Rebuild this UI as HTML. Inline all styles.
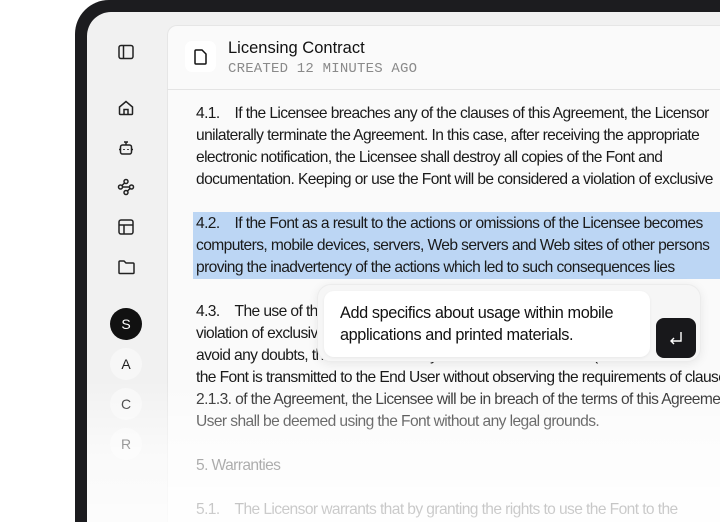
<!DOCTYPE html>
<html><head><style>
*{margin:0;padding:0;box-sizing:border-box}
html,body{width:720px;height:522px;overflow:hidden}
body{background:#fff;position:relative;font-family:"Liberation Sans",sans-serif}
.bezel{position:absolute;left:75px;top:0;width:645px;height:522px;background:#1c1c1f;border-radius:34px 0 0 0}
.screen{position:absolute;left:87px;top:12px;width:633px;height:510px;background:#f1f1f1;border-radius:24px 0 0 0;overflow:hidden}
.panel{position:absolute;left:167px;top:25px;width:553px;height:497px;background:#fafafa;border:1px solid #e6e6e6;border-right:0;border-bottom:0;border-radius:10px 0 0 0}
.hdr{position:absolute;left:167px;top:25px;width:553px;height:65px;border-bottom:1px solid #e4e4e4}
.docic{position:absolute;left:185px;top:41px;width:31px;height:31px;background:#fff;border-radius:7px}
.title{position:absolute;left:228px;top:39px;font-size:16.5px;color:#111}
.sub{position:absolute;left:228px;top:61px;font-family:"Liberation Mono",monospace;font-size:14px;color:#8a8a8a;letter-spacing:.2px}
.t{position:absolute;left:196px;font-size:15.6px;color:#1a1a1a;white-space:nowrap;letter-spacing:-0.6px;line-height:22px}
.hl{position:absolute;left:193px;top:212px;width:540px;height:67px;background:#bcd6f4}
.sb svg{position:absolute}
.av{position:absolute;left:110px;width:32px;height:32px;border-radius:50%;background:#f7f7f7;text-align:center;line-height:32px;font-size:14px;color:#222}
.fade{position:absolute;left:87px;top:380px;width:633px;height:142px;background:linear-gradient(rgba(255,255,255,0),rgba(255,255,255,.6) 50%,rgba(255,255,255,.8))}
.pop{position:absolute;left:317px;top:284px;width:384px;height:78px;background:#f6f6f6;border-radius:14px;box-shadow:0 2px 10px rgba(0,0,0,.08);border:1px solid #ececec}
.card{position:absolute;left:324px;top:291px;width:326px;height:66px;background:#fff;border-radius:10px;box-shadow:0 1px 3px rgba(0,0,0,.06)}
.ptxt{position:absolute;left:340px;top:302px;font-size:16.3px;line-height:22px;color:#111;letter-spacing:-0.4px}
.btn{position:absolute;left:656px;top:318px;width:40px;height:40px;background:#18181b;border-radius:8px}
</style></head><body>
<div class="bezel"></div>
<div class="screen"></div>
<div class="panel"></div>
<div class="hdr"></div>
<div class="docic"><svg width="31" height="31" viewBox="0 0 31 31"><path d="M11 9h6l4 4v9a1 1 0 0 1-1 1h-9a1 1 0 0 1-1-1V10a1 1 0 0 1 1-1z" fill="none" stroke="#111" stroke-width="1.5"/></svg></div>
<div class="title">Licensing Contract</div>
<div class="sub">CREATED 12 MINUTES AGO</div>
<div class="sb">
<svg style="left:117px;top:43px" width="18" height="18" viewBox="0 0 18 18" fill="none" stroke="#222" stroke-width="1.5"><rect x="2" y="2.5" width="14" height="13" rx="2"/><path d="M6.5 2.5v13"/></svg>
<svg style="left:117px;top:99px" width="18" height="18" viewBox="0 0 18 18" fill="none" stroke="#222" stroke-width="1.5"><path d="M2.5 8L9 2.5 15.5 8v6.5a1 1 0 0 1-1 1h-11a1 1 0 0 1-1-1z"/><path d="M7 15.5v-5h4v5"/></svg>
<svg style="left:117px;top:139px" width="18" height="18" viewBox="0 0 18 18" fill="none" stroke="#222" stroke-width="1.5"><rect x="3.5" y="6" width="11" height="9" rx="2"/><path d="M9 6V3M7 3h4M2 10.5h1.5M14.5 10.5H16"/><path d="M7 10v1M11 10v1" stroke-width="1.6"/></svg>
<svg style="left:117px;top:178px" width="18" height="18" viewBox="0 0 18 18" fill="none" stroke="#222" stroke-width="1.5"><circle cx="9" cy="3.5" r="2"/><circle cx="3.5" cy="9" r="2"/><circle cx="14.5" cy="9" r="2"/><circle cx="9" cy="14.5" r="2"/><path d="M7.5 5l-2.5 2.5M5.5 9h7M13 10.5L10.5 13"/></svg>
<svg style="left:117px;top:218px" width="18" height="18" viewBox="0 0 18 18" fill="none" stroke="#222" stroke-width="1.5"><rect x="2" y="2" width="14" height="14" rx="2"/><path d="M2 7h14M7 7v9"/></svg>
<svg style="left:117px;top:258px" width="19" height="18" viewBox="0 0 19 18" fill="none" stroke="#222" stroke-width="1.5"><path d="M2 4a1 1 0 0 1 1-1h4l2 2h7a1 1 0 0 1 1 1v8.5a1 1 0 0 1-1 1H3a1 1 0 0 1-1-1z"/></svg>
</div>
<div class="av" style="top:308px;background:#111;color:#fff">S</div>
<div class="av" style="top:348px">A</div>
<div class="av" style="top:388px">C</div>
<div class="av" style="top:428px">R</div>
<div class="hl"></div>
<div class="t" style="top:103px">4.1.&nbsp;&nbsp;&nbsp;&nbsp;If the Licensee breaches any of the clauses of this Agreement, the Licensor</div>
<div class="t" style="top:125px">unilaterally terminate the Agreement. In this case, after receiving the appropriate</div>
<div class="t" style="top:147px">electronic notification, the Licensee shall destroy all copies of the Font and</div>
<div class="t" style="top:169px">documentation. Keeping or use the Font will be considered a violation of exclusive</div>
<div class="t" style="top:213px">4.2.&nbsp;&nbsp;&nbsp;&nbsp;If the Font as a result to the actions or omissions of the Licensee becomes</div>
<div class="t" style="top:235px">computers, mobile devices, servers, Web servers and Web sites of other persons</div>
<div class="t" style="top:257px">proving the inadvertency of the actions which led to such consequences lies</div>
<div class="t" style="top:301px">4.3.&nbsp;&nbsp;&nbsp;&nbsp;The use of the Font by the End Users in any other way than its specified</div>
<div class="t" style="top:323px">violation of exclusive rights of the Licensor and shall be prosecuted</div>
<div class="t" style="top:345px">avoid any doubts, the Licensor hereby states that in case if the (do</div>
<div class="t" style="top:367px">the Font is transmitted to the End User without observing the requirements of clause</div>
<div class="t" style="top:389px">2.1.3. of the Agreement, the Licensee will be in breach of the terms of this Agreement</div>
<div class="t" style="top:411px">User shall be deemed using the Font without any legal grounds.</div>
<div class="t" style="top:455px">5. Warranties</div>
<div class="t" style="top:499px">5.1.&nbsp;&nbsp;&nbsp;&nbsp;The Licensor warrants that by granting the rights to use the Font to the</div>
<div class="fade"></div>
<div class="pop"></div>
<div class="card"></div>
<div class="ptxt">Add specifics about usage within mobile<br>applications and printed materials.</div>
<div class="btn"><svg width="40" height="40" viewBox="0 0 40 40" fill="none" stroke="#fff" stroke-width="1.4"><path d="M25 14v9H15M18 20l-3 3 3 3"/></svg></div>
</body></html>
